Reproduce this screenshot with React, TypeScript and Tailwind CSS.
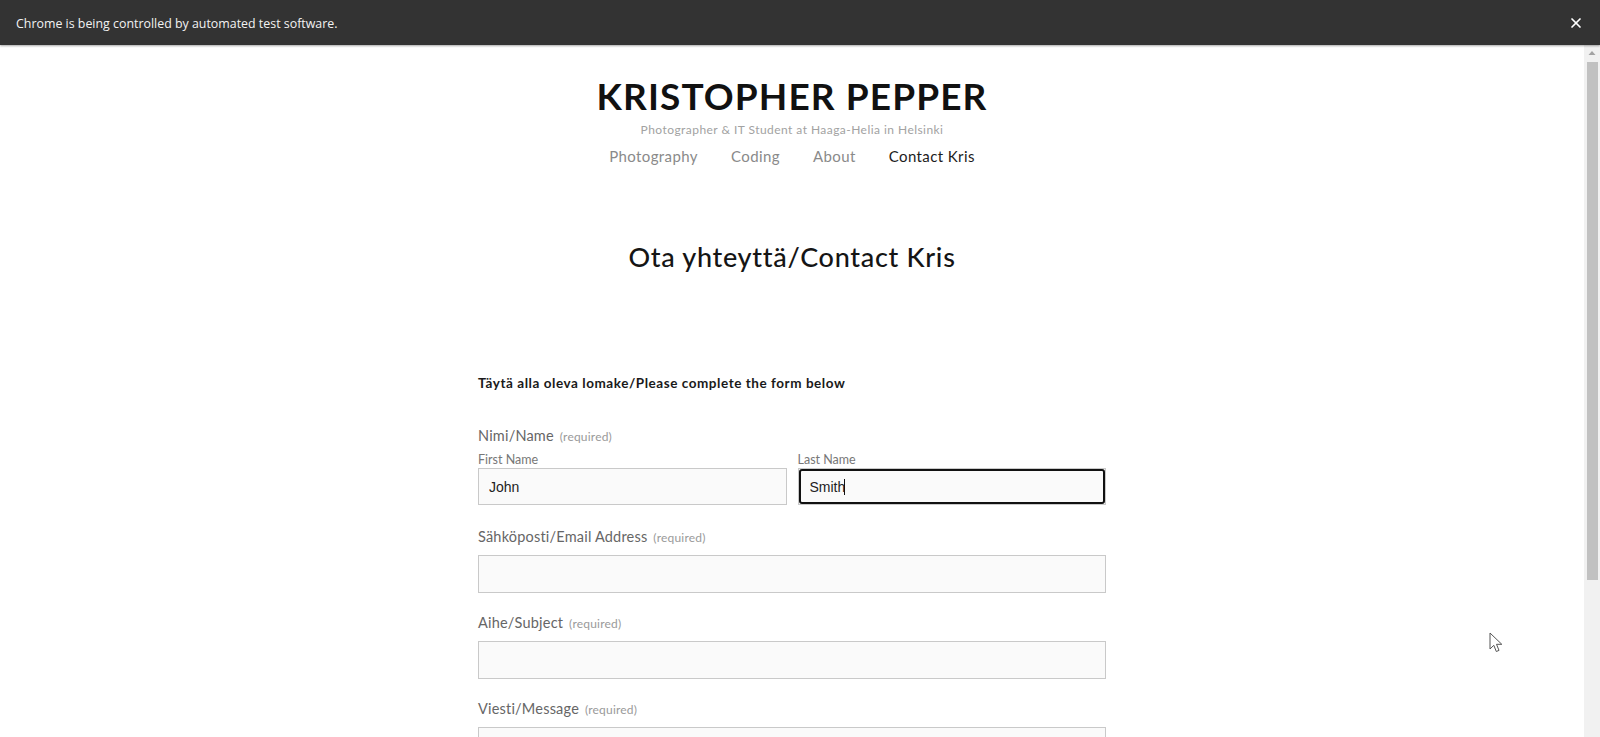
import { X } from "lucide-react";

const FONT = { fontFamily: "Lato, 'Open Sans', sans-serif" };
const ARIAL = { fontFamily: "'Liberation Sans', Arial, sans-serif" };

function Label({ text }: { text: string }) {
  return (
    <p className="text-[14.5px] leading-[20px] text-[#666] tracking-[0.2px]">
      {text} <span className="text-[12px] text-[#9a9a9a] ml-0.5">(required)</span>
    </p>
  );
}

function Field({ label }: { label: string }) {
  return (
    <div>
      <Label text={label} />
      <input
        readOnly
        className="mt-[7px] block w-full h-[38px] bg-[#fafafa] border border-[#c9c9c9] outline-none"
      />
    </div>
  );
}

function ChromeBar() {
  return (
    <div className="h-[45px] bg-[#333] flex items-center justify-between pl-4 pr-4 shadow-[0_1px_2px_rgba(0,0,0,0.35)] relative z-10">
      <span
        className="mt-[3px] text-[12.4px] text-[#f2f2f2]"
        style={{ fontFamily: "'Open Sans', 'Liberation Sans', sans-serif" }}
      >
        Chrome is being controlled by automated test software.
      </span>
      <X size={16} strokeWidth={2.6} className="text-white" />
    </div>
  );
}

function Scrollbar() {
  return (
    <div className="w-4 bg-[#f1f1f1] flex flex-col items-center">
      <svg width="8" height="6" viewBox="0 0 8 6" className="mt-[5px]">
        <path d="M4 1 L7.5 5 L0.5 5 Z" fill="#a3a3a3" />
      </svg>
      <div className="mt-[6px] w-[11px] h-[518px] bg-[#c1c1c1]" />
    </div>
  );
}

export default function App() {
  return (
    <div className="h-[737px] overflow-hidden bg-white flex flex-col" style={FONT}>
      <ChromeBar />
      <div className="flex flex-1 min-h-0 relative">
        <div className="flex-1 flex flex-col items-center pt-[32px]">
          <h1 className="text-[37px] leading-[38px] font-bold tracking-[1.1px] text-[#111]">
            KRISTOPHER PEPPER
          </h1>
          <p className="mt-[7px] text-[12px] leading-[16px] text-[#a2a2a2] tracking-[0.45px]">
            Photographer &amp; IT Student at Haaga-Helia in Helsinki
          </p>
          <nav className="mt-2 flex gap-[33px] text-[15px] leading-[20px] tracking-[0.4px]">
            <a className="text-[#8a8a8a]">Photography</a>
            <a className="text-[#8a8a8a]">Coding</a>
            <a className="text-[#8a8a8a]">About</a>
            <a className="text-[#1c1c1c]">Contact Kris</a>
          </nav>

          <h2 className="mt-[75px] text-[27px] leading-[32px] font-medium text-[#151515] tracking-[0.7px]">
            Ota yhteyttä/Contact Kris
          </h2>

          <form className="mt-[101px] w-[628px]">
            <p className="text-[13.5px] leading-[18px] font-bold text-[#1a1a1a] tracking-[0.55px]">
              Täytä alla oleva lomake/Please complete the form below
            </p>

            <div className="mt-[34px]">
              <Label text="Nimi/Name" />
              <div className="mt-[5px] flex gap-[11px]">
                <div className="flex-1">
                  <p className="text-[12.5px] leading-[16px] text-[#777]">First Name</p>
                  <input
                    readOnly
                    value="John"
                    className="block w-full h-[37px] bg-[#fafafa] border border-[#c9c9c9] px-[10px] text-[14px] text-[#222] outline-none"
                    style={ARIAL}
                  />
                </div>
                <div className="flex-1">
                  <p className="text-[12.5px] leading-[16px] text-[#777]">Last Name</p>
                  <div className="h-[37px] border border-[#c9c9c9] relative">
                    <input
                      readOnly
                      value="Smith"
                      className="block w-full h-full bg-[#fafafa] rounded-[3px] border-2 border-[#111] px-[9px] text-[14px] text-[#222] outline-none"
                      style={ARIAL}
                    />
                    <span className="absolute left-[45px] top-[10px] w-px h-[16px] bg-[#111]" />
                  </div>
                </div>
              </div>
            </div>

            <div className="mt-[22px] flex flex-col gap-[20px]">
              <Field label="Sähköposti/Email Address" />
              <Field label="Aihe/Subject" />
              <Field label="Viesti/Message" />
            </div>
          </form>
        </div>
        <Scrollbar />

        <svg
          width="15"
          height="22"
          viewBox="0 0 15 22"
          className="absolute left-[1489px] top-[587px]"
        >
          <path
            d="M1 1 L1 17 L4.8 13.3 L7.3 19.5 L10 18.4 L7.5 12.3 L12.8 12.3 Z"
            fill="#fff"
            stroke="#555"
            strokeWidth="1"
            strokeLinejoin="round"
          />
        </svg>
      </div>
    </div>
  );
}
